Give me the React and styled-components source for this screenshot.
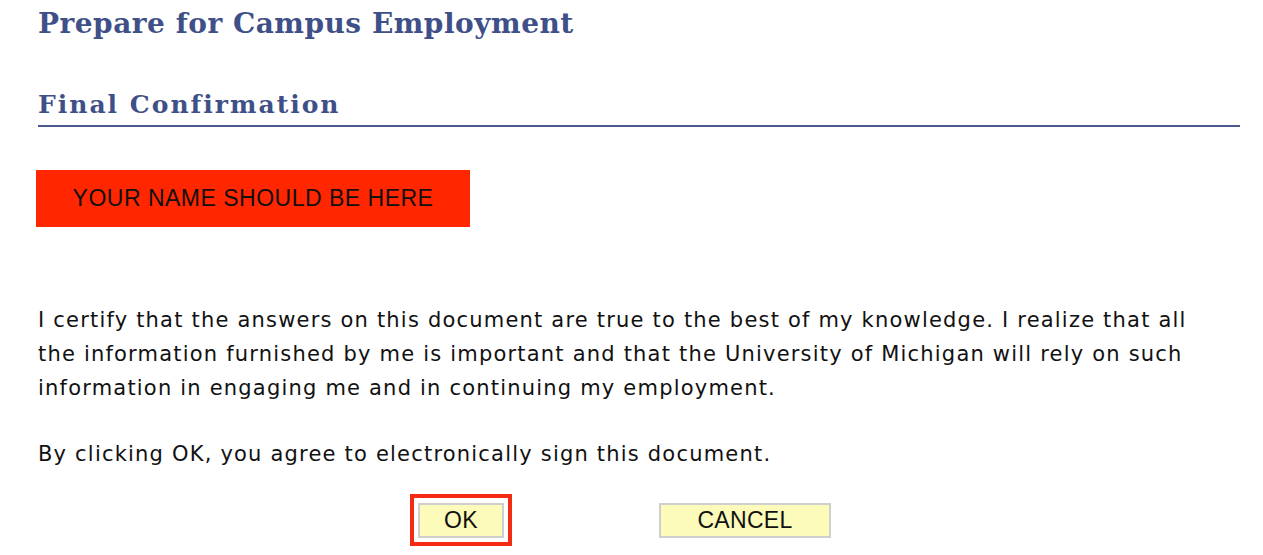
import styled, { createGlobalStyle } from "styled-components";

const GlobalStyle = createGlobalStyle`
  body {
    margin: 0;
    background: #ffffff;
  }
`;

const Page = styled.div`
  padding: 0 23px 0 38px;
`;

const PageTitle = styled.h1`
  margin: 0;
  padding-top: 4px;
  font-family: "DejaVu Serif", Georgia, serif;
  font-weight: bold;
  font-size: 28px;
  line-height: 40px;
  letter-spacing: 0.5px;
  color: #3f5088;
`;

const SectionTitle = styled.h2`
  margin: 43px 0 0;
  padding-bottom: 2px;
  font-family: "DejaVu Serif", Georgia, serif;
  font-weight: bold;
  font-size: 25px;
  line-height: 36px;
  letter-spacing: 2px;
  color: #3f5088;
  border-bottom: 2px solid #4a5a8c;
`;

const NameBanner = styled.div`
  margin: 43px 0 0 -2px;
  width: 434px;
  height: 57px;
  box-sizing: border-box;
  display: flex;
  align-items: center;
  justify-content: center;
  background: #ff2600;
  font-family: "Liberation Sans", Arial, sans-serif;
  font-size: 23px;
  letter-spacing: 0.5px;
  color: #111111;
`;

const Paragraph = styled.p`
  margin: ${(p) => p.$top}px 0 0;
  max-width: 1170px;
  font-family: "DejaVu Sans", Verdana, sans-serif;
  font-size: 21px;
  line-height: 34px;
  letter-spacing: 1.2px;
  color: #111111;
`;

const ButtonRow = styled.div`
  display: flex;
  align-items: center;
  margin-top: 23px;
  padding-left: 372px;
  gap: 147px;
`;

const Focus = styled.div`
  padding: 5px 4px 4px;
  border: 4px solid #f52a12;
  display: flex;
`;

const Button = styled.button`
  width: ${(p) => p.$width}px;
  height: 35px;
  box-sizing: border-box;
  border: 2px solid #cfcfcf;
  background: #fdfbb9;
  font-family: "Liberation Sans", Arial, sans-serif;
  font-size: 23px;
  letter-spacing: 0.3px;
  color: #111111;
  padding: 0;
  cursor: pointer;
`;

export default function App() {
  return (
    <>
      <GlobalStyle />
      <Page>
        <PageTitle>Prepare for Campus Employment</PageTitle>
        <SectionTitle>Final Confirmation</SectionTitle>
        <NameBanner>YOUR NAME SHOULD BE HERE</NameBanner>
        <Paragraph $top={76}>
          I certify that the answers on this document are true to the best of
          my knowledge. I realize that all the information furnished by me is
          important and that the University of Michigan will rely on such
          information in engaging me and in continuing my employment.
        </Paragraph>
        <Paragraph $top={32}>
          By clicking OK, you agree to electronically sign this document.
        </Paragraph>
        <ButtonRow>
          <Focus>
            <Button $width={86}>OK</Button>
          </Focus>
          <Button $width={172}>CANCEL</Button>
        </ButtonRow>
      </Page>
    </>
  );
}
